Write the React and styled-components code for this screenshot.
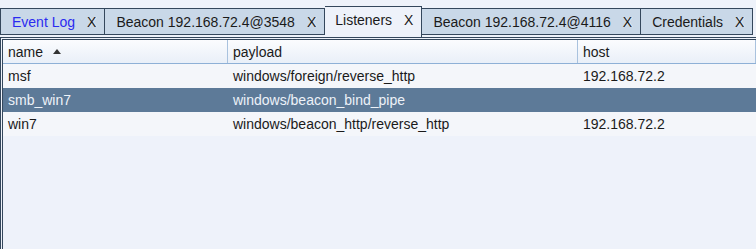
import React from "react";
import styled, { createGlobalStyle } from "styled-components";

const GlobalStyle = createGlobalStyle`
  html, body {
    margin: 0;
    padding: 0;
    background: #eef2fa;
    font-family: "Liberation Sans", Arial, sans-serif;
    font-size: 14px;
    color: #1a1a1a;
    overflow: hidden;
  }
`;

const Page = styled.div`
  width: 756px;
  height: 249px;
  display: flex;
  flex-direction: column;
  background: #eef2fa;
`;

const TabBar = styled.div`
  display: flex;
  align-items: flex-start;
  height: 31px;
  padding-top: 6px;
  position: relative;
`;

const Tab = styled.div`
  display: flex;
  align-items: center;
  box-sizing: border-box;
  margin-top: ${(p) => (p.active ? "0" : "2px")};
  height: ${(p) => (p.active ? "31px" : "27px")};
  padding: ${(p) => (p.active ? "0 8px 4px 10px" : "0 8px 0 11px")};
  background: ${(p) => (p.active ? "#eef2fa" : "#c9d8e8")};
  border: 1px solid #34475c;
  border-bottom: ${(p) => (p.active ? "none" : "1px solid #34475c")};
  border-left: ${(p) => (p.first ? "1px solid #34475c" : "none")};
  color: ${(p) => (p.blue ? "#2b2bf0" : "#1a1a1a")};
  white-space: nowrap;
`;

const Close = styled.span`
  margin-left: 12px;
  color: #1a1a1a;
  text-shadow: 1px 0 0 rgba(255, 255, 255, 0.6);
`;

const Panel = styled.div`
  flex: 1;
  border-top: 1px solid #34475c;
  border-left: 1px solid #34475c;
  padding: 1px 0 0 1px;
  display: flex;
`;

const Table = styled.div`
  flex: 1;
  border-top: 1px solid #34475c;
  border-left: 1px solid #34475c;
  display: flex;
  flex-direction: column;
`;

const Row = styled.div`
  display: grid;
  grid-template-columns: 225px 350px 1fr;
  height: 24px;
  align-items: center;
  background: ${(p) => (p.selected ? "#5d7a98" : "#f4f6fa")};
  color: ${(p) => (p.selected ? "#edf2f8" : "#1a1a1a")};
`;

const HeaderRow = styled.div`
  display: grid;
  grid-template-columns: 225px 350px 1fr;
  height: 23px;
  background: linear-gradient(#fbfcfe, #e9eff8);
  border-bottom: 1px solid #8eb0d6;
`;

const HeadCell = styled.div`
  display: flex;
  align-items: center;
  padding-left: 5px;
  border-right: 1px solid #a9c2de;
`;

const SortArrow = styled.span`
  display: inline-block;
  margin-left: 10px;
  width: 0;
  height: 0;
  border-left: 4px solid transparent;
  border-right: 4px solid transparent;
  border-bottom: 5px solid #333;
`;

const Cell = styled.div`
  padding-left: 5px;
  white-space: nowrap;
`;

const tabs = [
  { label: "Event Log", blue: true },
  { label: "Beacon 192.168.72.4@3548" },
  { label: "Listeners", active: true },
  { label: "Beacon 192.168.72.4@4116" },
  { label: "Credentials" },
];

const listeners = [
  { name: "msf", payload: "windows/foreign/reverse_http", host: "192.168.72.2" },
  { name: "smb_win7", payload: "windows/beacon_bind_pipe", host: "" },
  { name: "win7", payload: "windows/beacon_http/reverse_http", host: "192.168.72.2" },
];

export default function App() {
  return (
    <Page>
      <GlobalStyle />
      <TabBar>
        {tabs.map((t, i) => (
          <Tab key={i} active={t.active} blue={t.blue} first={i === 0}>
            {t.label}
            <Close>X</Close>
          </Tab>
        ))}
      </TabBar>
      <Panel>
        <Table>
          <HeaderRow>
            <HeadCell>
              name
              <SortArrow />
            </HeadCell>
            <HeadCell>payload</HeadCell>
            <HeadCell>host</HeadCell>
          </HeaderRow>
          {listeners.map((l) => (
            <Row key={l.name} selected={l.name === "smb_win7"}>
              <Cell>{l.name}</Cell>
              <Cell>{l.payload}</Cell>
              <Cell>{l.host}</Cell>
            </Row>
          ))}
        </Table>
      </Panel>
    </Page>
  );
}
